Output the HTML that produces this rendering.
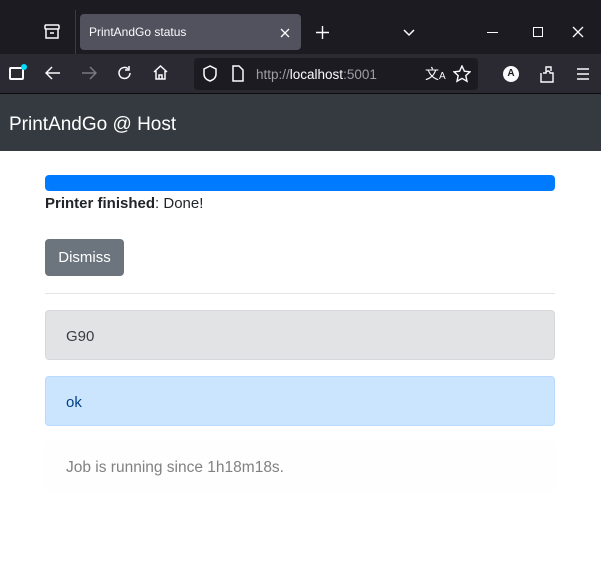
<!DOCTYPE html>
<html><head><style>
*{box-sizing:border-box;margin:0;padding:0}
body{width:601px;height:563px;background:#fff;font-family:"Liberation Sans",sans-serif;position:relative;overflow:hidden}
.a{position:absolute}
</style></head><body>
<div class="a" style="left:0;top:0;width:601px;height:54px;background:#1c1b22"></div>
<div class="a" style="left:75px;top:10px;width:1px;height:44px;background:#3a3944"></div>
<svg class="a" style="left:43px;top:23px" width="18" height="18" viewBox="0 0 18 18" fill="none" stroke="#fbfbfe" stroke-width="1.5"><rect x="2" y="2" width="14" height="4" rx="1"/><path d="M3 6v9h12V6M7 10h4"/></svg>
<div class="a" style="left:80px;top:14px;width:221px;height:36px;background:#52525e;border-radius:4px"></div>
<div class="a" style="left:89px;top:25px;color:#fbfbfe;font-size:12px">PrintAndGo status</div>
<svg class="a" style="left:280px;top:28px" width="10" height="10"><path d="M1 1l8 8M9 1L1 9" stroke="#fbfbfe" stroke-width="1.3"/></svg>
<svg class="a" style="left:316px;top:26px" width="13" height="13"><path d="M6.5 0v13M0 6.5h13" stroke="#fbfbfe" stroke-width="1.4"/></svg>
<svg class="a" style="left:402px;top:28px" width="14" height="10"><path d="M2 2l5 5 5-5" stroke="#fbfbfe" stroke-width="1.5" fill="none"/></svg>
<div class="a" style="left:487px;top:32px;width:11px;height:1px;background:#fbfbfe"></div>
<div class="a" style="left:533px;top:27px;width:10px;height:10px;border:1.2px solid #fbfbfe"></div>
<svg class="a" style="left:572px;top:26px" width="12" height="12"><path d="M1 1l10 10M11 1L1 11" stroke="#fbfbfe" stroke-width="1.3"/></svg>
<div class="a" style="left:0;top:54px;width:601px;height:40px;background:#2b2a33"></div>
<div class="a" style="left:9px;top:67px;width:15px;height:13px;border:2px solid #fbfbfe;border-radius:2px"></div>
<div class="a" style="left:21px;top:64px;width:6px;height:6px;background:#0df;border-radius:50%"></div>
<svg class="a" style="left:45px;top:66px" width="16" height="14"><path d="M15 7H2M7 1L1 7l6 6" stroke="#fbfbfe" stroke-width="1.5" fill="none"/></svg>
<svg class="a" style="left:81px;top:66px" width="16" height="14"><path d="M1 7h13M9 1l6 6-6 6" stroke="#7a7980" stroke-width="1.5" fill="none"/></svg>
<svg class="a" style="left:117px;top:65px" width="16" height="16"><path d="M13 8a5.5 5.5 0 11-2-4.3M12 1v4H8" stroke="#fbfbfe" stroke-width="1.5" fill="none"/></svg>
<svg class="a" style="left:152px;top:64px" width="17" height="17"><path d="M2 8l6.5-6 6.5 6M4 7v8h9V7M7 15v-4h3v4" stroke="#fbfbfe" stroke-width="1.5" fill="none"/></svg>
<div class="a" style="left:194px;top:58px;width:284px;height:32px;background:#1c1b22;border-radius:4px"></div>
<svg class="a" style="left:202px;top:65px" width="16" height="18"><path d="M8 1L2 4v5c0 4 3 6 6 7 3-1 6-3 6-7V4z" stroke="#fbfbfe" stroke-width="1.5" fill="none"/></svg>
<svg class="a" style="left:231px;top:65px" width="14" height="17"><path d="M2 1h6l4 4v11H2z" stroke="#fbfbfe" stroke-width="1.5" fill="none"/></svg>
<div class="a" style="left:256px;top:67px;color:#9e9ea6;font-size:13.5px">http://<span style="color:#fbfbfe">localhost</span>:5001</div>
<div class="a" style="left:425px;top:64px;color:#fbfbfe;font-size:14px">文<span style="font-size:10px">A</span></div>
<svg class="a" style="left:453px;top:65px" width="18" height="18"><path d="M9 1l2.4 5.2 5.6.6-4.2 3.8 1.2 5.6L9 13.4 4 16.2l1.2-5.6L1 6.8l5.6-.6z" stroke="#fbfbfe" stroke-width="1.4" fill="none"/></svg>
<div class="a" style="left:503px;top:66px;width:16px;height:16px;background:#fbfbfe;border-radius:50%;color:#1c1b22;font-size:10px;font-weight:bold;text-align:center;line-height:16px">A</div>
<svg class="a" style="left:538px;top:64px" width="18" height="20"><path d="M3 9v9h12V9h-3a2 2 0 10-4 0H5M8 9V3h5v4" stroke="#fbfbfe" stroke-width="1.4" fill="none"/></svg>
<svg class="a" style="left:576px;top:67px" width="14" height="14"><path d="M1 2h12M1 7h12M1 12h12" stroke="#fbfbfe" stroke-width="1.4"/></svg>
<div class="a" style="left:0;top:93px;width:601px;height:1px;background:#0c0c0d"></div>
<div class="a" style="left:0;top:94px;width:601px;height:57px;background:#343a40"></div>
<div class="a" style="left:9px;top:114px;color:#fff;font-size:19px">PrintAndGo @ Host</div>
<div class="a" style="left:45px;top:175px;width:510px;height:16px;background:#007bff;border-radius:4px"></div>
<div class="a" style="left:45px;top:195px;color:#212529;font-size:15px"><b>Printer finished</b>: Done!</div>
<div class="a" style="left:45px;top:239px;width:79px;height:37px;background:#6c757d;border-radius:4px;color:#fff;font-size:15px;text-align:center;line-height:37px">Dismiss</div>
<div class="a" style="left:45px;top:293px;width:510px;height:1px;background:#e5e5e5"></div>
<div class="a" style="left:45px;top:310px;width:510px;height:50px;background:#e2e3e5;border:1px solid #d6d8db;border-radius:4px;color:#383d41;font-size:15px;padding:17px 20px">G90</div>
<div class="a" style="left:45px;top:376px;width:510px;height:50px;background:#cce5ff;border:1px solid #b8daff;border-radius:4px;color:#004085;font-size:15px;padding:17px 20px">ok</div>
<div class="a" style="left:45px;top:442px;width:510px;height:50px;background:#fefefe;border:1px solid #fdfdfe;border-radius:4px;color:#818182;font-size:15.5px;padding:16px 20px">Job is running since 1h18m18s.</div>
</body></html>
